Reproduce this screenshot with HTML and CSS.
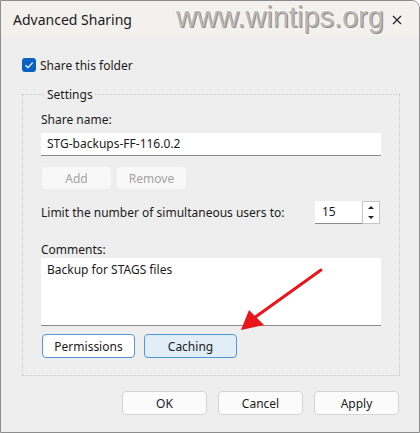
FILE: index.html
```html
<!DOCTYPE html>
<html lang="en">
<head>
    <meta charset="UTF-8">
    <title>Advanced Sharing</title>
    <link rel="stylesheet" href="styles.css">
</head>
<body>
    <div class="window">
        <div class="titlebar">
            <span class="title">Advanced Sharing</span>
            <span class="watermark">www.wintips.org</span>
            <svg class="close" width="10" height="10" viewBox="0 0 10 10">
                <path d="M1 1 L9 9 M9 1 L1 9" stroke="#222" stroke-width="1.2" fill="none"/>
            </svg>
        </div>

        <div class="content">
            <label class="check-row">
                <span class="checkbox">
                    <svg width="10" height="10" viewBox="0 0 10 10">
                        <path d="M1.5 5.2 L4 7.6 L8.6 2.6" stroke="#fff" stroke-width="1.3" fill="none"/>
                    </svg>
                </span>
                Share this folder
            </label>

            <fieldset class="settings">
                <legend>Settings</legend>

                <div class="field-label">Share name:</div>
                <div class="textbox">STG-backups-FF-116.0.2</div>

                <div class="btn-row">
                    <button class="btn btn-disabled">Add</button>
                    <button class="btn btn-disabled btn-remove">Remove</button>
                </div>

                <div class="limit-row">
                    <span>Limit the number of simultaneous users to:</span>
                    <div class="spinner">
                        <span class="spin-value">15</span>
                        <span class="spin-arrows">
                            <svg width="10" height="9" viewBox="0 0 10 9"><path d="M2 6 L5 3 L8 6 Z" fill="#222"/></svg>
                            <svg width="10" height="9" viewBox="0 0 10 9"><path d="M2 3 L5 6 L8 3 Z" fill="#222"/></svg>
                        </span>
                    </div>
                </div>

                <div class="field-label comments-label">Comments:</div>
                <div class="textarea">Backup for STAGS files</div>

                <div class="btn-row perm-row">
                    <button class="btn btn-blue">Permissions</button>
                    <button class="btn btn-blue btn-focused">Caching</button>
                </div>
            </fieldset>

            <div class="dialog-buttons">
                <button class="btn btn-dialog">OK</button>
                <button class="btn btn-dialog">Cancel</button>
                <button class="btn btn-dialog">Apply</button>
            </div>
        </div>

        <!-- red arrow drawn over the dialog -->
        <svg class="arrow" width="420" height="433" viewBox="0 0 420 433">
            <line x1="321" y1="270" x2="254" y2="318" stroke="#e8151b" stroke-width="3" stroke-linecap="round"/>
            <path d="M241 330 L249 310 L264 325 Z" fill="#e8151b"/>
        </svg>
    </div>
</body>
</html>
```

FILE: styles.css
```css
body {
    margin: 0;
    font-family: "Noto Sans", "Open Sans", sans-serif;
    font-size: 12px;
    color: #1b1b1b;
    background: #ffffff;
}

.window {
    position: relative;
    width: 420px;
    height: 433px;
    box-sizing: border-box;
    border: 1px solid #8c8c8c;
    border-radius: 0 8px 0 0;
    background: #eeeeee;
    overflow: hidden;
}

.titlebar {
    position: relative;
    height: 36px;
    display: flex;
    align-items: center;
    padding-left: 12px;
    background: #f3f1ee;
}

.title {
    font-size: 14px;
    color: #1a1a1a;
}

/* watermark stamped over the title bar */
.watermark {
    position: absolute;
    left: 175px;
    top: 2px;
    font-family: "Liberation Sans", Arial, sans-serif;
    font-size: 29px;
    line-height: 29px;
    color: #bcb7b2;
    text-shadow: 1px 1px 0 #8e8a86, -1px -1px 0 #ffffff;
}

.close {
    position: absolute;
    right: 17px;
    top: 14px;
}

.content {
    padding: 20px 20px 0 21px;
}

.check-row {
    display: flex;
    align-items: center;
    gap: 4px;
    height: 16px;
}

.checkbox {
    width: 14px;
    height: 14px;
    border-radius: 3px;
    background: #0a63c2;
    display: flex;
    align-items: center;
    justify-content: center;
}

.settings {
    margin: 13px 0 0 0;
    width: 378px;
    box-sizing: border-box;
    border: 1px dotted #c9c9c9;
    padding: 9px 18px 17px 18px;
}

.settings legend {
    padding: 0 2px;
    margin-left: 4px;
}

.field-label {
    height: 16px;
    line-height: 16px;
}

.textbox {
    margin-top: 5px;
    height: 23px;
    line-height: 22px;
    box-sizing: border-box;
    width: 340px;
    padding-left: 6px;
    background: #ffffff;
    border-bottom: 1px solid #8a8a8a;
}

.btn {
    font-family: inherit;
    font-size: 12px;
    box-sizing: border-box;
    height: 24px;
    padding: 0;
    border-radius: 4px;
}

.btn-row {
    display: flex;
    gap: 6px;
    margin-top: 11px;
    padding-left: 1px;
}

.btn-disabled {
    width: 69px;
    height: 22px;
    border: none;
    background: #f8f8f8;
    color: #a3a3a3;
}

.limit-row {
    display: flex;
    align-items: center;
    justify-content: space-between;
    width: 340px;
    margin-top: 12px;
}

.spinner {
    display: flex;
    height: 23px;
    margin-right: 1px;
}

.spin-value {
    width: 47px;
    box-sizing: border-box;
    padding-left: 7px;
    line-height: 22px;
    background: #ffffff;
    border-bottom: 1px solid #8a8a8a;
}

.spin-arrows {
    display: flex;
    flex-direction: column;
    width: 18px;
    box-sizing: border-box;
    border: 1px solid #c4c4c4;
    background: #ffffff;
}

.spin-arrows svg {
    display: block;
    margin: 1px auto 0;
}

.comments-label {
    margin-top: 18px;
}

.textarea {
    width: 340px;
    height: 68px;
    box-sizing: border-box;
    padding: 3px 6px;
    background: #ffffff;
    border-bottom: 1px solid #8a8a8a;
}

.perm-row {
    gap: 9px;
    margin-top: 8px;
}

.btn-blue {
    width: 93px;
    border: 1.5px solid #4d98d8;
    background: #ffffff;
    color: #1b1b1b;
}

.btn-focused {
    background: #e1edf7;
}

.dialog-buttons {
    display: flex;
    justify-content: flex-end;
    gap: 11px;
    margin-top: 15px;
}

.btn-dialog {
    width: 85px;
    border: 1px solid #d4d4d4;
    background: #fbfbfb;
    color: #1b1b1b;
}

.arrow {
    position: absolute;
    left: -1px;
    top: -1px;
    pointer-events: none;
}
```
